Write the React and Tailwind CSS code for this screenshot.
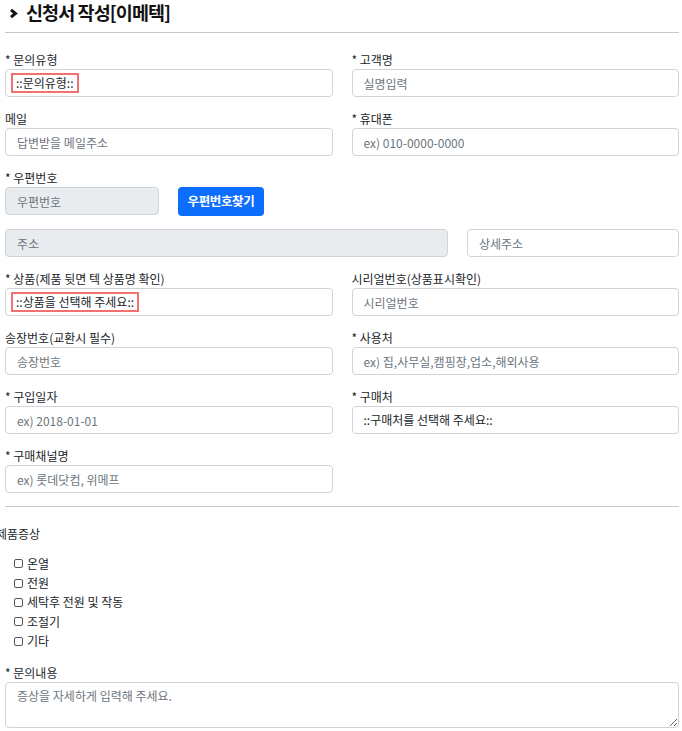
const font = { fontFamily: '"Noto Sans CJK KR", "Noto Sans", sans-serif' };

const inputCls =
    "block h-[28px] rounded-[4px] border border-[#ced4da] px-[11px] text-[12px] text-[#212529] placeholder:text-[#6c757d] outline-none";

const Label = ({ children }) => (
    <div className="h-[18px] leading-[18px] text-[12px] text-[#212529]">{children}</div>
);

const Field = ({ label, placeholder, pad = "px-[11px]" }) => (
    <div>
        <Label>{label}</Label>
        <input className={`${inputCls} w-full bg-white ${pad}`} placeholder={placeholder} />
    </div>
);

const SelectBox = ({ label, text, marked }) => (
    <div>
        <Label>{label}</Label>
        <div className="flex h-[28px] w-full items-center rounded-[4px] border border-[#ced4da] bg-white pl-[5px] text-[12px] text-[#212529]">
            {marked ? (
                <span className="flex h-[20px] items-center border-2 border-[#f27070] px-[3px]">{text}</span>
            ) : (
                <span className="pl-[6px]">{text}</span>
            )}
        </div>
    </div>
);

const symptoms = ["온열", "전원", "세탁후 전원 및 작동", "조절기", "기타"];

export default function App() {
    return (
        <div className="min-h-[731px] bg-white pl-[5px] pr-[3px] text-[#212529]" style={font}>
            <div className="flex h-[26px] items-center">
                <svg width="9" height="11" viewBox="0 0 9 11" className="ml-[4px] mr-[8px]">
                    <polyline points="2,1.8 6.5,5.5 2,9.2" fill="none" stroke="#111" strokeWidth="3" />
                </svg>
                <h1 className="text-[18.5px] font-bold tracking-[-0.05em] text-[#111]">신청서 작성[이메텍]</h1>
            </div>
            <div className="mt-[6px] border-t border-[#c8c8c8]" />

            <div className="mt-[18px] grid grid-cols-2 gap-x-[19px] gap-y-[13px]">
                <SelectBox label="* 문의유형" text="::문의유형::" marked />
                <Field label="* 고객명" placeholder="실명입력" />
                <Field label="메일" placeholder="답변받을 메일주소" />
                <Field label="* 휴대폰" placeholder="ex) 010-0000-0000" />

                <div className="col-span-2">
                    <Label>* 우편번호</Label>
                    <div className="flex gap-[19px]">
                        <input className={`${inputCls} w-[154px] bg-[#e9ecef]`} placeholder="우편번호" readOnly />
                        <button className="h-[29px] w-[86px] rounded-[4px] bg-[#0d6efd] text-[12.5px] font-semibold tracking-[-0.03em] text-white">
                            우편번호찾기
                        </button>
                    </div>
                </div>

                <div className="col-span-2 flex gap-[19px]">
                    <input className={`${inputCls} min-w-0 flex-1 bg-[#e9ecef]`} placeholder="주소" readOnly />
                    <input className={`${inputCls} w-[212px] bg-white`} placeholder="상세주소" />
                </div>

                <SelectBox label="* 상품(제품 뒷면 텍 상품명 확인)" text="::상품을 선택해 주세요::" marked />
                <Field label="시리얼번호(상품표시확인)" placeholder="시리얼번호" />
                <Field label="송장번호(교환시 필수)" placeholder="송장번호" />
                <Field label="* 사용처" placeholder="ex) 집,사무실,캠핑장,업소,해외사용" />
                <Field label="* 구입일자" placeholder="ex) 2018-01-01" pad="px-[3px]" />
                <SelectBox label="* 구매처" text="::구매처를 선택해 주세요::" />
                <Field label="* 구매채널명" placeholder="ex) 롯데닷컴, 위메프" />
            </div>

            <div className="mt-[13px] border-t border-[#c8c8c8]" />

            <div className="-ml-[9px] mt-[18px]">
                <Label>제품증상</Label>
            </div>
            <ul className="mt-[11px] pl-[9px]">
                {symptoms.map((s) => (
                    <li key={s} className="flex h-[19.4px] items-center gap-[4px] text-[12px]">
                        <span className="h-[9px] w-[9px] rounded-[2px] border border-[#555] bg-white" />
                        {s}
                    </li>
                ))}
            </ul>

            <div className="mt-[13px]">
                <Label>* 문의내용</Label>
                <textarea
                    className="block h-[46px] w-full rounded-[4px] border border-[#ced4da] px-[11px] py-[4px] text-[12px] placeholder:text-[#6c757d] outline-none"
                    placeholder="증상을 자세하게 입력해 주세요."
                />
            </div>
        </div>
    );
}
